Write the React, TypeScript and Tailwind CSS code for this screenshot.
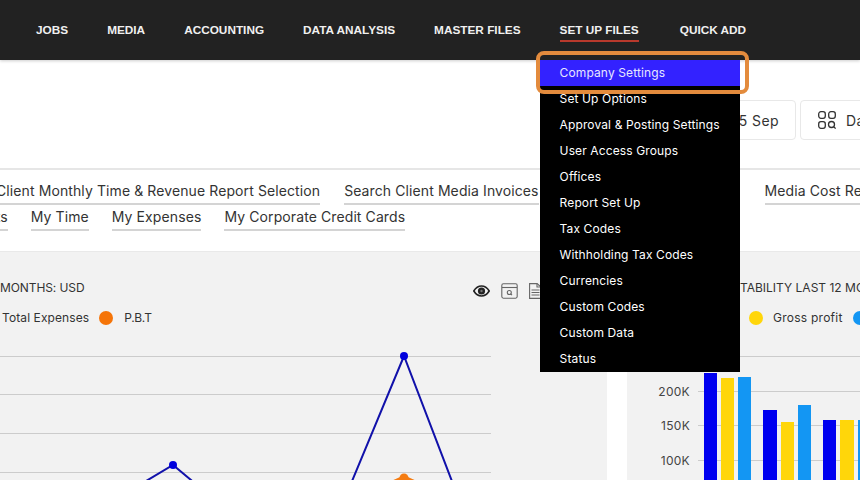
const navItems = ["JOBS", "MEDIA", "ACCOUNTING", "DATA ANALYSIS", "MASTER FILES", "SET UP FILES", "QUICK ADD"];

const menuItems = [
  "Company Settings",
  "Set Up Options",
  "Approval & Posting Settings",
  "User Access Groups",
  "Offices",
  "Report Set Up",
  "Tax Codes",
  "Withholding Tax Codes",
  "Currencies",
  "Custom Codes",
  "Custom Data",
  "Status",
];

function SetUpMenu() {
  return (
    <ul className="absolute left-[-20px] top-full z-20 w-[200px] bg-black font-[Inter,sans-serif] text-[12px] font-normal leading-[26px] tracking-[0.12px] text-white">
      {menuItems.map((item, i) => (
        <li key={item} className={i === 0 ? "relative h-[26px] bg-[#3322ff] pl-5 text-[#e6e6ff]" : "h-[26px] pl-5"}>
          {item}
          {i === 0 && (
            <span className="absolute -left-1 -right-[9px] -top-[9px] -bottom-2 rounded-lg border-4 border-[#e38b3d]" />
          )}
        </li>
      ))}
    </ul>
  );
}

function NavBar() {
  return (
    <nav className="relative z-10 flex h-[60px] gap-[39px] bg-[#222222] pl-9 shadow-[0_1px_3px_rgba(0,0,0,0.2)]">
      {navItems.map((item) => (
        <div key={item} className="relative flex h-[60px] items-center pt-0.5 font-['Liberation_Sans',sans-serif] text-[11.8px] font-bold text-[#f0f0f0] last:ml-0.5">
          {item}
          {item === "SET UP FILES" && (
            <>
              <span className="absolute inset-x-0 top-10 h-0.5 bg-[#b8392c]" />
              <SetUpMenu />
            </>
          )}
        </div>
      ))}
    </nav>
  );
}

function DashIcon() {
  return (
    <svg width="18" height="18" viewBox="0 0 18 18" fill="none" stroke="#333" strokeWidth="1.3">
      <rect x="0.7" y="0.7" width="6.6" height="6.6" rx="2.2" />
      <rect x="10.7" y="0.7" width="6.6" height="6.6" rx="2.2" />
      <rect x="0.7" y="10.7" width="6.6" height="6.6" rx="2.2" />
      <circle cx="13.5" cy="13.5" r="3" />
      <path d="M15.6 15.6 17.6 17.6" />
    </svg>
  );
}

function Toolbar() {
  return (
    <div className="flex h-[108px] w-max items-start gap-1 pl-[596px] pt-10">
      <button className="flex h-10 w-[200px] items-center justify-end rounded border border-[#e8e8e8] pr-4 text-[14px] tracking-[0.4px] text-[#333]">
        25 Aug - 25 Sep
      </button>
      <button className="flex h-10 w-[180px] items-center gap-2.5 rounded border border-[#e8e8e8] pl-[17px] text-[14px] tracking-[0.4px] text-[#333]">
        <DashIcon />
        Dashboard
      </button>
    </div>
  );
}

function QuickLink({ label }: { label: string }) {
  return (
    <a className="h-[26px] whitespace-nowrap border-b-2 border-[#d4d4d4] text-[14px] leading-[23px] tracking-[0.1px] text-[#333]">
      {label}
    </a>
  );
}

function QuickLinks() {
  return (
    <div className="h-[84px] border-y-2 border-b border-t-[#e6e6e6] border-b-[#e9e9e9] pt-[9px]">
      <div className="-ml-1 flex h-[26px] w-max gap-6">
        <QuickLink label="Client Monthly Time & Revenue Report Selection" />
        <QuickLink label="Search Client Media Invoices" />
        <div className="w-[178px]" />
        <QuickLink label="Media Cost Report" />
      </div>
      <div className="-ml-[70px] flex h-[26px] w-max gap-[23px]">
        <QuickLink label="Timesheets" />
        <QuickLink label="My Time" />
        <QuickLink label="My Expenses" />
        <QuickLink label="My Corporate Credit Cards" />
      </div>
    </div>
  );
}

function PanelIcons() {
  return (
    <div className="flex items-center gap-[11px]">
      <svg width="17" height="12" viewBox="0 0 17 12">
        <path d="M0.8 6C3 2.4 5.6 1 8.5 1s5.500 1.400 7.700 5c-2.200 3.600-4.800 5-7.700 5S3 9.600.8 6Z" fill="none" stroke="#222" strokeWidth="1.6" />
        <circle cx="8.5" cy="6" r="3.6" fill="#222" />
        <circle cx="8.5" cy="6" r="1.2" fill="#777" />
      </svg>
      <svg width="17" height="16" viewBox="0 0 17 16" fill="none" stroke="#666" strokeWidth="1.1">
        <rect x="0.8" y="0.8" width="15.4" height="14.4" rx="1.6" />
        <path d="M1 4.500h15" />
        <circle cx="8.300" cy="9.500" r="2" />
        <path d="M9.800 11 11 12.200" />
      </svg>
      <svg width="12" height="16" viewBox="0 0 12 16" fill="none" stroke="#666" strokeWidth="1.1">
        <path d="M.6.6h7.500L12 4v11.400H.6Z" />
        <path d="M8 .6V4h4M2.500 7h8M2.500 9.500h8M2.500 12h8" />
      </svg>
    </div>
  );
}

function LineChart() {
  return (
    <svg width="607" height="146" viewBox="0 334 607 146" className="block">
      {[356.500, 394.500, 433.500, 472.500].map((y) => (
        <line key={y} x1="0" x2="491" y1={y} y2={y} stroke="#cccccc" />
      ))}
      <polyline points="136,487 173,465 203,490" fill="none" stroke="#1111aa" strokeWidth="2" />
      <polyline points="345,498 404,356 463,510" fill="none" stroke="#1111aa" strokeWidth="2" />
      <circle cx="173" cy="465" r="4" fill="#0000dd" />
      <circle cx="404" cy="356" r="4" fill="#0000dd" />
      <polyline points="388,484 404,477 420,484" fill="none" stroke="#f57c12" strokeWidth="3" />
      <circle cx="404" cy="478" r="4.500" fill="#f57c12" />
    </svg>
  );
}

const bars = [
  { x: 704, w: 13, top: 373, fill: "#0000f0" },
  { x: 721, w: 13, top: 378, fill: "#ffd60a" },
  { x: 738, w: 13, top: 377, fill: "#1396f3" },
  { x: 763, w: 14, top: 410, fill: "#0000f0" },
  { x: 781, w: 13, top: 422, fill: "#ffd60a" },
  { x: 798, w: 13, top: 405, fill: "#1396f3" },
  { x: 823, w: 13, top: 420, fill: "#0000f0" },
  { x: 840, w: 14, top: 420, fill: "#ffd60a" },
  { x: 858, w: 13, top: 420, fill: "#1396f3" },
];

function BarChart() {
  return (
    <svg width="233" height="146" viewBox="627 334 233 146" className="block">
      <line x1="698" x2="860" y1="356.500" y2="356.500" stroke="#cccccc" />
      {[
        { y: 391.500, label: "200K" },
        { y: 425.500, label: "150K" },
        { y: 460.500, label: "100K" },
      ].map((t) => (
        <g key={t.label}>
          <line x1="698" x2="860" y1={t.y} y2={t.y} stroke="#cccccc" />
          <text x="690" y={t.y + 4} textAnchor="end" fontSize="12" letterSpacing="0.3" fill="#444">
            {t.label}
          </text>
        </g>
      ))}
      {bars.map((b) => (
        <rect key={b.x} x={b.x} y={b.top} width={b.w} height={480 - b.top} fill={b.fill} />
      ))}
    </svg>
  );
}

function Charts() {
  return (
    <div className="flex h-[228px] gap-5">
      <section className="w-[607px] shrink-0 bg-[#f2f2f2]">
        <div className="flex h-[50px] items-start justify-between pr-[66px]">
          <h3 className="pt-[28px] text-[12px] leading-[15px] tracking-[-0.1px] text-[#333]">MONTHS: USD</h3>
          <div className="pt-[31px]"><PanelIcons /></div>
        </div>
        <div className="flex h-8 items-center pl-0.5 text-[12px] tracking-[0.1px] text-[#333]">
          Total Expenses
          <span className="ml-[10px] mr-[11px] size-[14px] rounded-full bg-[#f57408]" />
          <span className="tracking-[-0.4px]">P.B.T</span>
        </div>
        <LineChart />
      </section>
      <section className="w-[233px] shrink-0 bg-[#f2f2f2]">
        <h3 className="h-[50px] whitespace-nowrap pl-[113px] pt-[28px] text-[12px] leading-[15px] text-[#333]">TABILITY LAST 12 MONTHS</h3>
        <div className="flex h-8 items-center whitespace-nowrap pl-[122px] text-[12px] tracking-[0.25px] text-[#333]">
          <span className="mr-[10px] size-[14px] shrink-0 rounded-full bg-[#ffd60a]" />
          Gross profit
          <span className="ml-[10px] size-[14px] shrink-0 rounded-full bg-[#1396f3]" />
        </div>
        <BarChart />
      </section>
    </div>
  );
}

export default function App() {
  return (
    <div className="relative h-[480px] w-[860px] overflow-hidden bg-white font-[Inter,sans-serif]">
      <NavBar />
      <Toolbar />
      <QuickLinks />
      <Charts />
    </div>
  );
}
